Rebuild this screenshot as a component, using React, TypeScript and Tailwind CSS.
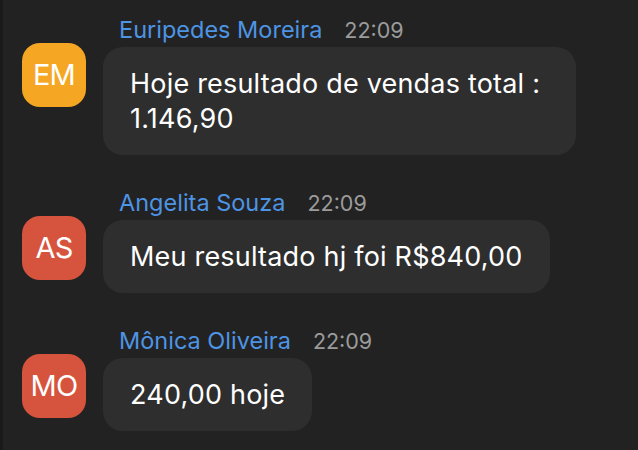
const messages = [
  {
    initials: "EM",
    name: "Euripedes Moreira",
    time: "22:09",
    color: "bg-[#f5a623]",
    text: "Hoje resultado de vendas total : 1.146,90",
  },
  {
    initials: "AS",
    name: "Angelita Souza",
    time: "22:09",
    color: "bg-[#d6543d]",
    text: "Meu resultado hj foi R$840,00",
  },
  {
    initials: "MO",
    name: "Mônica Oliveira",
    time: "22:09",
    color: "bg-[#d6543d]",
    text: "240,00 hoje",
  },
];

export default function App() {
  return (
    <div
      className="w-[638px] h-[450px] overflow-hidden bg-[#222222] border-l-[3px] border-[#1a1a1a] pt-4 pl-[19px]"
      style={{ fontFamily: "Inter, 'Noto Sans', sans-serif" }}
    >
      <div className="flex flex-col gap-[34px]">
        {messages.map((m) => (
          <div key={m.initials} className="flex items-start">
            <div
              className={`w-16 h-16 mt-[27px] shrink-0 rounded-[18px] ${m.color} flex items-center justify-center text-white text-[29px] tracking-tight`}
            >
              {m.initials}
            </div>
            <div className="ml-[17px] flex flex-col">
              <div className="flex items-center h-7 pl-4 gap-[22px] text-[23.5px] leading-7">
                <span className="text-[#4e94e4]">{m.name}</span>
                <span className="text-[#9b9b9b] text-[21.5px]">{m.time}</span>
              </div>
              <div className="mt-[3px] w-fit max-w-[473px] rounded-[20px] bg-[#2e2e2e] px-[27px] py-[19px] text-white text-[27px] leading-[35px] tracking-[0.2px]">
                {m.text}
              </div>
            </div>
          </div>
        ))}
      </div>
    </div>
  );
}
